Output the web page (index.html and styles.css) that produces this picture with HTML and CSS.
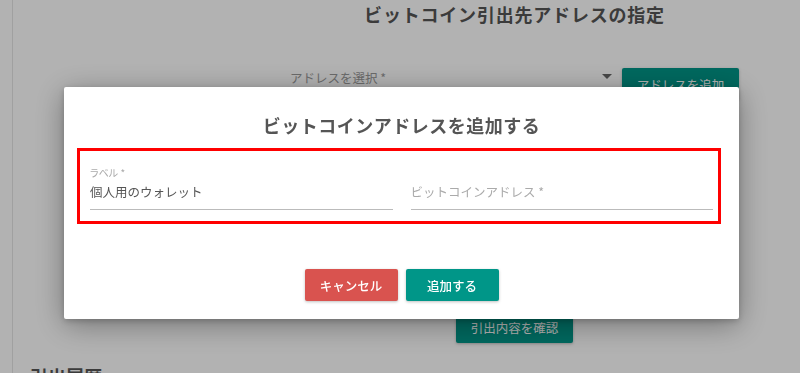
FILE: index.html
```html
<!DOCTYPE html>
<html lang="ja">
<head>
    <meta charset="UTF-8">
    <meta name="viewport" content="width=device-width, initial-scale=1.0">
    <title>ビットコイン引出</title>
    <link rel="stylesheet" href="styles.css">
</head>
<body>

<div class="page">
    <aside class="rail"></aside>

    <main class="content">
        <section class="withdraw">
            <h2 class="section-title">ビットコイン引出先アドレスの指定</h2>

            <div class="select-row">
                <div class="select">
                    <span class="select-label">アドレスを選択 *</span>
                    <span class="select-arrow"></span>
                </div>
                <button class="btn btn-teal">アドレスを追加</button>
            </div>

            <div class="confirm-row">
                <button class="btn btn-teal">引出内容を確認</button>
            </div>
        </section>

        <h2 class="history-title">引出履歴</h2>
    </main>
</div>

<div class="overlay">
    <div class="modal">
        <h3 class="modal-title">ビットコインアドレスを追加する</h3>

        <div class="fields">
            <div class="field">
                <label class="field-label">ラベル *</label>
                <div class="field-value">個人用のウォレット</div>
            </div>
            <div class="field">
                <label class="field-label"></label>
                <div class="field-value placeholder">ビットコインアドレス *</div>
            </div>
        </div>

        <div class="modal-actions">
            <button class="btn btn-red">キャンセル</button>
            <button class="btn btn-teal">追加する</button>
        </div>
    </div>
</div>

</body>
</html>
```

FILE: styles.css
```css
* {
    box-sizing: border-box;
}
body {
    margin: 0;
    padding: 0;
    background: #fff;
    font-family: "Noto Sans CJK JP", "Noto Sans", sans-serif;
    color: #555;
    overflow: hidden;
}
.page {
    display: flex;
    min-height: 373px;
}
.rail {
    width: 13px;
    border-right: 1px solid #e6e6e6;
    flex-shrink: 0;
}
.content {
    flex: 1;
}
.withdraw {
    width: 449px;
    margin-left: 277px;
}
.section-title {
    margin: 0;
    padding-top: 2px;
    font-size: 18px;
    line-height: 24px;
    letter-spacing: 0.8px;
    text-align: center;
    font-weight: bold;
    color: #555;
}
.select-row {
    display: flex;
    gap: 7px;
    margin-top: 42px;
}
.select {
    flex: 1;
    display: flex;
    justify-content: space-between;
    align-items: center;
    height: 32px;
    padding-right: 3px;
    border-bottom: 1px solid #ccc;
}
.select-label {
    font-size: 12.5px;
    color: #999;
    margin-top: -12px;
}
.select-arrow {
    width: 0;
    height: 0;
    border-left: 5px solid transparent;
    border-right: 5px solid transparent;
    border-top: 5px solid #666;
    margin-top: -14px;
}
.btn {
    border: none;
    border-radius: 2px;
    height: 32px;
    padding: 0;
    white-space: nowrap;
    font-family: inherit;
    font-size: 12.5px;
    color: #fff;
    cursor: pointer;
    box-shadow: 0 1px 3px rgba(0,0,0,0.25);
}
.select-row .btn {
    width: 117px;
}
.btn-teal {
    background-color: #009688;
}
.btn-red {
    background-color: #d9534f;
}
.confirm-row {
    display: flex;
    justify-content: center;
    margin-top: 211px;
}
.confirm-row .btn {
    width: 117px;
}
.history-title {
    margin: 20px 0 0 17px;
    font-size: 18px;
    font-weight: bold;
    color: #555;
}

/* modal */
.overlay {
    position: fixed;
    inset: 0;
    background: rgba(0, 0, 0, 0.3);
    padding: 87px 0 0 64px;
}
.modal {
    width: 675px;
    height: 232px;
    background: #fff;
    border-radius: 2px;
    box-shadow: 0 6px 30px rgba(0,0,0,0.35), 0 2px 6px rgba(0,0,0,0.2);
    padding-top: 26px;
}
.modal-title {
    margin: 0;
    font-size: 18px;
    line-height: 24px;
    letter-spacing: 0.5px;
    text-align: center;
    font-weight: bold;
    color: #555;
}
.fields {
    display: flex;
    gap: 18px;
    margin: 11px 18px 0 13px;
    padding: 15px 5px 11px 10px;
    border: 3px solid #f00;
}
.field {
    flex: 1;
    border-bottom: 1px solid #bbb;
}
.field-label {
    display: block;
    height: 14px;
    font-size: 10px;
    line-height: 14px;
    color: #aaa;
    font-feature-settings: "palt";
}
.field-value {
    font-size: 12.5px;
    line-height: 20px;
    padding: 2px 0 7px;
    color: #555;
}
.field-value.placeholder {
    color: #aaa;
}
.modal-actions {
    display: flex;
    justify-content: center;
    gap: 8px;
    margin-top: 45px;
}
.modal-actions .btn {
    width: 93px;
    font-weight: 500;
}
```
